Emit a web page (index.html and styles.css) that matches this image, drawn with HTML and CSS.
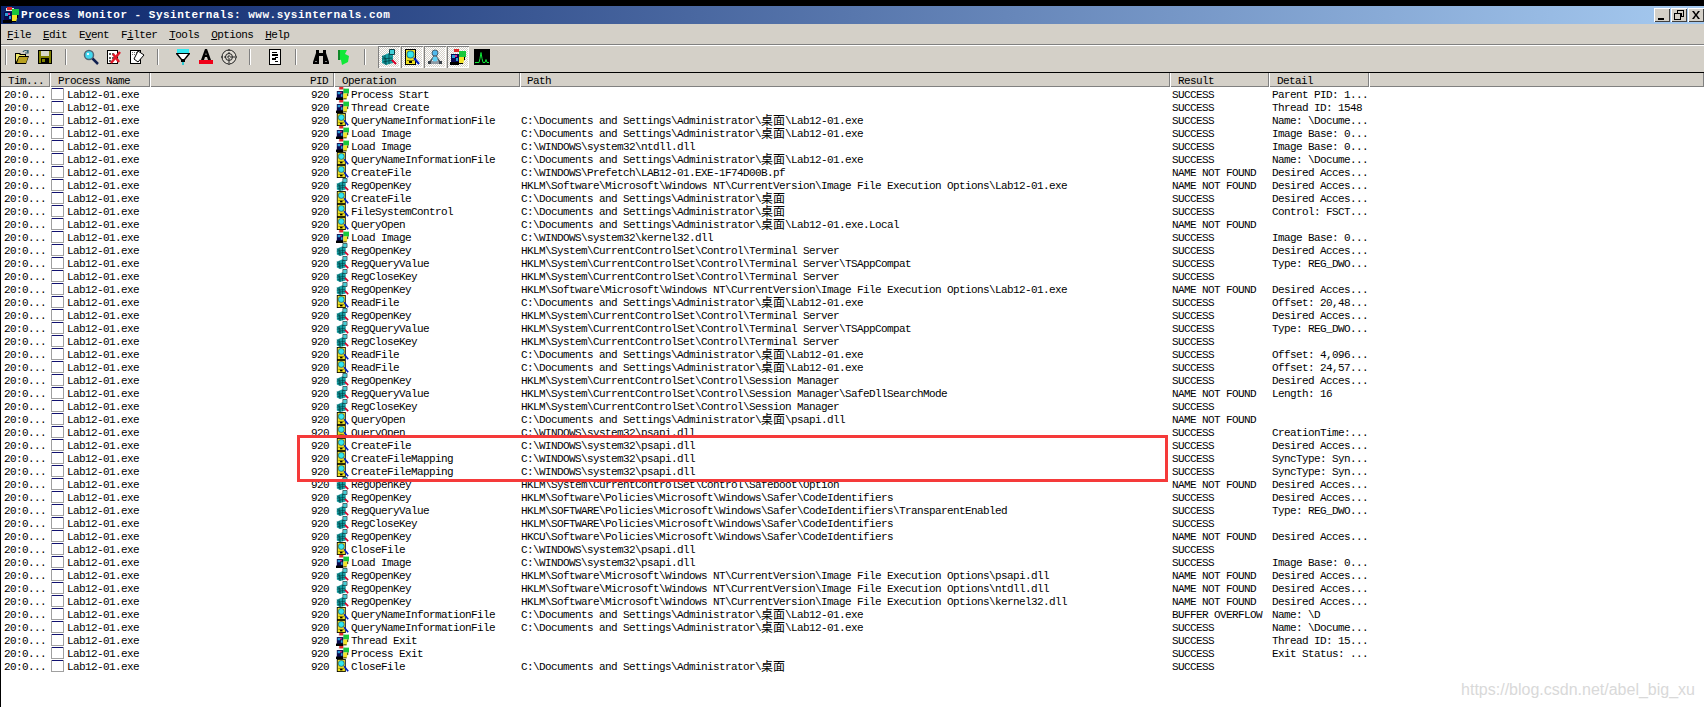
FILE: index.html
```html
<!DOCTYPE html>
<html lang="en">
<head>
<meta charset="utf-8">
<title>Process Monitor - Sysinternals: www.sysinternals.com</title>
<link rel="stylesheet" href="styles.css">
</head>
<body>
<svg class="sprites" xmlns="http://www.w3.org/2000/svg">
  <symbol id="i-proc" viewBox="0 0 16 16"><path fill="#e8e8e8" d="M3 1h8v3H3z"/><path fill="#e02828" d="M4 0h5v3H4z"/><path fill="#18c83c" d="M9 2h7v6H9z"/><path fill="#0a0a50" d="M1 5h8v9H1z"/><path fill="#2a9fd8" d="M2 6h3v3H2zM6 9h2v3H6z"/><path fill="#e02890" d="M5 6h2v2H5z"/><path fill="#000" d="M0 13h9v3H0z"/><path fill="#f4e428" d="M9 8h6l-2 7H9z"/><path fill="#000" d="M9 14h4v1H9zM14 8h1v3h-1z"/></symbol>
  <symbol id="i-file" viewBox="0 0 16 16"><path fill="#000" d="M1 0h11v16H1z"/><path fill="#f0e020" d="M2 1h9v14H2z"/><path fill="#808000" d="M3 11h7v1H3z"/><path fill="#000" d="M5 12h3v2H5z"/><circle cx="6.500" cy="5.500" r="4" fill="#2a7a88"/><circle cx="6.500" cy="5.500" r="3" fill="#30e8f0"/><path fill="none" stroke="#0020c0" stroke-width="2" d="M10 9l5 6"/></symbol>
  <symbol id="i-reg" viewBox="0 0 16 16"><path fill="#18a0a4" d="M1 7l7-3 4 2v8l-7 2-4-2z"/><path fill="none" stroke="#004448" stroke-width=".8" d="M1 10l10-1M2 13l10-2M4 6v9M8 5v10M1 7l4 3v6"/><path fill="#40d0d8" d="M9 1h4v4H9z"/><path fill="none" stroke="#104048" d="M8.500.5h5v5h-5z"/><path fill="none" stroke="#d80028" stroke-width="2" d="M11 11l4 4"/></symbol>
  <symbol id="i-pw" viewBox="0 0 13 13"><path fill="#a0a0a0" d="M0 1h13v12H0z"/><path fill="#fff" d="M1 2h11v10H1z"/><path fill="#101070" d="M1 1h11v1H1z"/></symbol>
  <symbol id="i-net" viewBox="0 0 16 16"><path fill="#909aa4" d="M1 12h14v3H1z"/><path fill="none" stroke="#505860" stroke-width="1.500" d="M8 6L3 13M8 6l5 7"/><circle cx="8" cy="4" r="3" fill="#50b8ec" stroke="#486070"/><circle cx="8" cy="10" r="2.500" fill="#60d0f4"/><path fill="#384048" d="M1 12h3v3H1zM12 12h3v3h-3z"/></symbol>
  <symbol id="i-open" viewBox="0 0 16 16"><path fill="#000" d="M1 4h5l1 1h5v2h3l-3 8H1z"/><path fill="#f0e868" d="M2 5h3l1 1h5v1H5l-3 6z"/><path fill="#b8a020" d="M5 8h9l-2 6H3z"/><path fill="none" stroke="#285868" stroke-width="1.200" d="M9 3c1-2 4-2 5 0M14 1v3h-3"/></symbol>
  <symbol id="i-save" viewBox="0 0 16 16"><path fill="#000" d="M1 1h14v14H1z"/><path fill="#808000" d="M2 2h12v12H2z"/><path fill="#d8d8c8" d="M4 2h8v5H4z"/><path fill="#000" d="M4 9h8v5H4z"/><path fill="#808000" d="M5 10h3v3H5z"/></symbol>
  <symbol id="i-mag" viewBox="0 0 16 16"><circle cx="6" cy="6" r="4.500" fill="#40d8f0" stroke="#506878" stroke-width="1.500"/><path fill="#e8f8ff" d="M4 4h2v2H4z"/><path fill="none" stroke="#102050" stroke-width="2.500" d="M9.500 9.500L15 15"/></symbol>
  <symbol id="i-cap" viewBox="0 0 16 16"><path fill="#000" d="M1 1h11v14H1z"/><path fill="#fff" d="M2 2h9v12H2z"/><path fill="#606060" d="M3 4h2v2H3zM6 4h2v2H6zM3 8h2v2H3zM6 8h2v2H6zM3 11h2v2H3z"/><path fill="none" stroke="#e01828" stroke-width="2.500" d="M5 14L14 3M7 5l6 8"/></symbol>
  <symbol id="i-auto" viewBox="0 0 16 16"><path fill="#000" d="M1 1h11v14H1z"/><path fill="#fff" d="M2 2h9v12H2z"/><path fill="#707070" d="M3 3h1v1H3zM5 3h1v1H5zM7 3h1v1H7zM3 5h1v1H3zM5 5h1v1H5z"/><path fill="#fff" stroke="#000" d="M9 2l6 4-6 7-4-3z"/></symbol>
  <symbol id="i-filter" viewBox="0 0 16 16"><path fill="#30e8f0" d="M2 0h12v4H2z"/><path fill="#000" d="M1 4h14v1l-5 6v2H6v-2L1 5z"/><path fill="#fff" d="M3 5h10l-4 5H7z"/><path fill="#30c8d0" d="M7 13h2v3H7z"/></symbol>
  <symbol id="i-high" viewBox="0 0 16 16"><path fill="#000" d="M7 0h2l4 11H10l-1-3H7l-1 3H3zM7.500 6h1L8 3.500z"/><path fill="#f00018" d="M1 11h14v4H1z"/></symbol>
  <symbol id="i-tgt" viewBox="0 0 16 16"><circle cx="8" cy="8" r="7" fill="#e0dcd4" stroke="#202020" stroke-width="1"/><circle cx="8" cy="8" r="3.500" fill="none" stroke="#202020"/><path stroke="#202020" fill="none" stroke-dasharray="2 1" d="M8 0v16M0 8h16"/></symbol>
  <symbol id="i-doc" viewBox="0 0 16 16"><path fill="#000" d="M2 0h12v16H2z"/><path fill="#fff" d="M3 1h10v14H3z"/><path fill="#000" d="M5 3h5v1H5zM5 5h6v2H5zM8 8h3v1H8zM5 9h4v2H5zM8 12h3v1H8z"/></symbol>
  <symbol id="i-bin" viewBox="0 0 16 16"><path fill="#000" d="M3 1h3v3h4V1h3v3l3 9v2H10V7H6v8H0v-2l3-9z"/><path fill="#808080" d="M2 12h2v1H2zM12 12h2v1h-2z"/></symbol>
  <symbol id="i-jump" viewBox="0 0 16 16"><path fill="#10e838" d="M2 1h9l-2 4 4 2-1 6-6 3-1-5-3-1z"/><path fill="#108828" d="M2 1h2v10H2z"/></symbol>
  <symbol id="i-graph" viewBox="0 0 16 16"><path fill="#000" d="M0 0h16v16H0z"/><path fill="none" stroke="#10e838" d="M1 13.500h4l1-4 1-6 1 6 1 4h2l1-3 1 3h2"/></symbol>
</svg>

<div class="app">
  <div class="screen-top"></div>
  <header class="titlebar">
    <svg class="title-icon"><use href="#i-proc"/></svg>
    <span class="title-text">Process Monitor - Sysinternals: www.sysinternals.com</span>
    <div class="win-controls">
      <span class="win-btn"><svg viewBox="0 0 16 14"><path d="M4 10h6v2H4z"/></svg></span>
      <span class="win-btn"><svg viewBox="0 0 16 14"><path d="M6 2h7v7h-3v3H3V5h3zM7 3v2h4v3h1V3zM4 6v5h5V6z"/></svg></span>
      <span class="win-btn"><svg viewBox="0 0 16 14"><path d="M4 3h2l2 3 2-3h2L9 7l3 4h-2L8 8l-2 3H4l3-4z"/></svg></span>
    </div>
  </header>
  <nav class="menubar">
    <span><u>F</u>ile</span><span><u>E</u>dit</span><span>E<u>v</u>ent</span><span>F<u>i</u>lter</span><span><u>T</u>ools</span><span><u>O</u>ptions</span><span><u>H</u>elp</span>
  </nav>
  <div class="toolbar">
    <span class="sep sep-first"></span>
    <span class="tool"><svg><use href="#i-open"/></svg></span>
    <span class="tool"><svg><use href="#i-save"/></svg></span>
    <span class="sep"></span>
    <span class="tool"><svg><use href="#i-mag"/></svg></span>
    <span class="tool"><svg><use href="#i-cap"/></svg></span>
    <span class="tool"><svg><use href="#i-auto"/></svg></span>
    <span class="sep"></span>
    <span class="tool"><svg><use href="#i-filter"/></svg></span>
    <span class="tool"><svg><use href="#i-high"/></svg></span>
    <span class="tool"><svg><use href="#i-tgt"/></svg></span>
    <span class="sep"></span>
    <span class="tool"><svg><use href="#i-doc"/></svg></span>
    <span class="sep"></span>
    <span class="tool"><svg><use href="#i-bin"/></svg></span>
    <span class="tool"><svg><use href="#i-jump"/></svg></span>
    <span class="sep"></span>
    <span class="tool on"><svg><use href="#i-reg"/></svg></span>
    <span class="tool on"><svg><use href="#i-file"/></svg></span>
    <span class="tool on"><svg><use href="#i-net"/></svg></span>
    <span class="tool on"><svg><use href="#i-proc"/></svg></span>
    <span class="tool"><svg><use href="#i-graph"/></svg></span>
  </div>
  <table class="log">
    <colgroup>
      <col class="c-time"><col class="c-proc"><col class="c-pid"><col class="c-op"><col class="c-path"><col class="c-res"><col class="c-det"><col>
    </colgroup>
    <thead>
      <tr><th>Tim...</th><th>Process Name</th><th class="pid">PID</th><th>Operation</th><th class="h-path">Path</th><th>Result</th><th>Detail</th><th></th></tr>
    </thead>
    <tbody>
      <tr><td class="time">20:0...</td><td><svg class="ic"><use href="#i-pw"/></svg>Lab12-01.exe</td><td class="pid">920</td><td class="op"><svg class="ic"><use href="#i-proc"/></svg>Process Start</td><td></td><td class="res">SUCCESS</td><td class="det">Parent PID: 1...</td><td></td></tr>
      <tr><td class="time">20:0...</td><td><svg class="ic"><use href="#i-pw"/></svg>Lab12-01.exe</td><td class="pid">920</td><td class="op"><svg class="ic"><use href="#i-proc"/></svg>Thread Create</td><td></td><td class="res">SUCCESS</td><td class="det">Thread ID: 1548</td><td></td></tr>
      <tr><td class="time">20:0...</td><td><svg class="ic"><use href="#i-pw"/></svg>Lab12-01.exe</td><td class="pid">920</td><td class="op"><svg class="ic"><use href="#i-file"/></svg>QueryNameInformationFile</td><td>C:\Documents and Settings\Administrator\<span class="cjk">桌面</span>\Lab12-01.exe</td><td class="res">SUCCESS</td><td class="det">Name: \Docume...</td><td></td></tr>
      <tr><td class="time">20:0...</td><td><svg class="ic"><use href="#i-pw"/></svg>Lab12-01.exe</td><td class="pid">920</td><td class="op"><svg class="ic"><use href="#i-proc"/></svg>Load Image</td><td>C:\Documents and Settings\Administrator\<span class="cjk">桌面</span>\Lab12-01.exe</td><td class="res">SUCCESS</td><td class="det">Image Base: 0...</td><td></td></tr>
      <tr><td class="time">20:0...</td><td><svg class="ic"><use href="#i-pw"/></svg>Lab12-01.exe</td><td class="pid">920</td><td class="op"><svg class="ic"><use href="#i-proc"/></svg>Load Image</td><td>C:\WINDOWS\system32\ntdll.dll</td><td class="res">SUCCESS</td><td class="det">Image Base: 0...</td><td></td></tr>
      <tr><td class="time">20:0...</td><td><svg class="ic"><use href="#i-pw"/></svg>Lab12-01.exe</td><td class="pid">920</td><td class="op"><svg class="ic"><use href="#i-file"/></svg>QueryNameInformationFile</td><td>C:\Documents and Settings\Administrator\<span class="cjk">桌面</span>\Lab12-01.exe</td><td class="res">SUCCESS</td><td class="det">Name: \Docume...</td><td></td></tr>
      <tr><td class="time">20:0...</td><td><svg class="ic"><use href="#i-pw"/></svg>Lab12-01.exe</td><td class="pid">920</td><td class="op"><svg class="ic"><use href="#i-file"/></svg>CreateFile</td><td>C:\WINDOWS\Prefetch\LAB12-01.EXE-1F74D00B.pf</td><td class="res">NAME NOT FOUND</td><td class="det">Desired Acces...</td><td></td></tr>
      <tr><td class="time">20:0...</td><td><svg class="ic"><use href="#i-pw"/></svg>Lab12-01.exe</td><td class="pid">920</td><td class="op"><svg class="ic"><use href="#i-reg"/></svg>RegOpenKey</td><td>HKLM\Software\Microsoft\Windows NT\CurrentVersion\Image File Execution Options\Lab12-01.exe</td><td class="res">NAME NOT FOUND</td><td class="det">Desired Acces...</td><td></td></tr>
      <tr><td class="time">20:0...</td><td><svg class="ic"><use href="#i-pw"/></svg>Lab12-01.exe</td><td class="pid">920</td><td class="op"><svg class="ic"><use href="#i-file"/></svg>CreateFile</td><td>C:\Documents and Settings\Administrator\<span class="cjk">桌面</span></td><td class="res">SUCCESS</td><td class="det">Desired Acces...</td><td></td></tr>
      <tr><td class="time">20:0...</td><td><svg class="ic"><use href="#i-pw"/></svg>Lab12-01.exe</td><td class="pid">920</td><td class="op"><svg class="ic"><use href="#i-file"/></svg>FileSystemControl</td><td>C:\Documents and Settings\Administrator\<span class="cjk">桌面</span></td><td class="res">SUCCESS</td><td class="det">Control: FSCT...</td><td></td></tr>
      <tr><td class="time">20:0...</td><td><svg class="ic"><use href="#i-pw"/></svg>Lab12-01.exe</td><td class="pid">920</td><td class="op"><svg class="ic"><use href="#i-file"/></svg>QueryOpen</td><td>C:\Documents and Settings\Administrator\<span class="cjk">桌面</span>\Lab12-01.exe.Local</td><td class="res">NAME NOT FOUND</td><td class="det"></td><td></td></tr>
      <tr><td class="time">20:0...</td><td><svg class="ic"><use href="#i-pw"/></svg>Lab12-01.exe</td><td class="pid">920</td><td class="op"><svg class="ic"><use href="#i-proc"/></svg>Load Image</td><td>C:\WINDOWS\system32\kernel32.dll</td><td class="res">SUCCESS</td><td class="det">Image Base: 0...</td><td></td></tr>
      <tr><td class="time">20:0...</td><td><svg class="ic"><use href="#i-pw"/></svg>Lab12-01.exe</td><td class="pid">920</td><td class="op"><svg class="ic"><use href="#i-reg"/></svg>RegOpenKey</td><td>HKLM\System\CurrentControlSet\Control\Terminal Server</td><td class="res">SUCCESS</td><td class="det">Desired Acces...</td><td></td></tr>
      <tr><td class="time">20:0...</td><td><svg class="ic"><use href="#i-pw"/></svg>Lab12-01.exe</td><td class="pid">920</td><td class="op"><svg class="ic"><use href="#i-reg"/></svg>RegQueryValue</td><td>HKLM\System\CurrentControlSet\Control\Terminal Server\TSAppCompat</td><td class="res">SUCCESS</td><td class="det">Type: REG_DWO...</td><td></td></tr>
      <tr><td class="time">20:0...</td><td><svg class="ic"><use href="#i-pw"/></svg>Lab12-01.exe</td><td class="pid">920</td><td class="op"><svg class="ic"><use href="#i-reg"/></svg>RegCloseKey</td><td>HKLM\System\CurrentControlSet\Control\Terminal Server</td><td class="res">SUCCESS</td><td class="det"></td><td></td></tr>
      <tr><td class="time">20:0...</td><td><svg class="ic"><use href="#i-pw"/></svg>Lab12-01.exe</td><td class="pid">920</td><td class="op"><svg class="ic"><use href="#i-reg"/></svg>RegOpenKey</td><td>HKLM\Software\Microsoft\Windows NT\CurrentVersion\Image File Execution Options\Lab12-01.exe</td><td class="res">NAME NOT FOUND</td><td class="det">Desired Acces...</td><td></td></tr>
      <tr><td class="time">20:0...</td><td><svg class="ic"><use href="#i-pw"/></svg>Lab12-01.exe</td><td class="pid">920</td><td class="op"><svg class="ic"><use href="#i-file"/></svg>ReadFile</td><td>C:\Documents and Settings\Administrator\<span class="cjk">桌面</span>\Lab12-01.exe</td><td class="res">SUCCESS</td><td class="det">Offset: 20,48...</td><td></td></tr>
      <tr><td class="time">20:0...</td><td><svg class="ic"><use href="#i-pw"/></svg>Lab12-01.exe</td><td class="pid">920</td><td class="op"><svg class="ic"><use href="#i-reg"/></svg>RegOpenKey</td><td>HKLM\System\CurrentControlSet\Control\Terminal Server</td><td class="res">SUCCESS</td><td class="det">Desired Acces...</td><td></td></tr>
      <tr><td class="time">20:0...</td><td><svg class="ic"><use href="#i-pw"/></svg>Lab12-01.exe</td><td class="pid">920</td><td class="op"><svg class="ic"><use href="#i-reg"/></svg>RegQueryValue</td><td>HKLM\System\CurrentControlSet\Control\Terminal Server\TSAppCompat</td><td class="res">SUCCESS</td><td class="det">Type: REG_DWO...</td><td></td></tr>
      <tr><td class="time">20:0...</td><td><svg class="ic"><use href="#i-pw"/></svg>Lab12-01.exe</td><td class="pid">920</td><td class="op"><svg class="ic"><use href="#i-reg"/></svg>RegCloseKey</td><td>HKLM\System\CurrentControlSet\Control\Terminal Server</td><td class="res">SUCCESS</td><td class="det"></td><td></td></tr>
      <tr><td class="time">20:0...</td><td><svg class="ic"><use href="#i-pw"/></svg>Lab12-01.exe</td><td class="pid">920</td><td class="op"><svg class="ic"><use href="#i-file"/></svg>ReadFile</td><td>C:\Documents and Settings\Administrator\<span class="cjk">桌面</span>\Lab12-01.exe</td><td class="res">SUCCESS</td><td class="det">Offset: 4,096...</td><td></td></tr>
      <tr><td class="time">20:0...</td><td><svg class="ic"><use href="#i-pw"/></svg>Lab12-01.exe</td><td class="pid">920</td><td class="op"><svg class="ic"><use href="#i-file"/></svg>ReadFile</td><td>C:\Documents and Settings\Administrator\<span class="cjk">桌面</span>\Lab12-01.exe</td><td class="res">SUCCESS</td><td class="det">Offset: 24,57...</td><td></td></tr>
      <tr><td class="time">20:0...</td><td><svg class="ic"><use href="#i-pw"/></svg>Lab12-01.exe</td><td class="pid">920</td><td class="op"><svg class="ic"><use href="#i-reg"/></svg>RegOpenKey</td><td>HKLM\System\CurrentControlSet\Control\Session Manager</td><td class="res">SUCCESS</td><td class="det">Desired Acces...</td><td></td></tr>
      <tr><td class="time">20:0...</td><td><svg class="ic"><use href="#i-pw"/></svg>Lab12-01.exe</td><td class="pid">920</td><td class="op"><svg class="ic"><use href="#i-reg"/></svg>RegQueryValue</td><td>HKLM\System\CurrentControlSet\Control\Session Manager\SafeDllSearchMode</td><td class="res">NAME NOT FOUND</td><td class="det">Length: 16</td><td></td></tr>
      <tr><td class="time">20:0...</td><td><svg class="ic"><use href="#i-pw"/></svg>Lab12-01.exe</td><td class="pid">920</td><td class="op"><svg class="ic"><use href="#i-reg"/></svg>RegCloseKey</td><td>HKLM\System\CurrentControlSet\Control\Session Manager</td><td class="res">SUCCESS</td><td class="det"></td><td></td></tr>
      <tr><td class="time">20:0...</td><td><svg class="ic"><use href="#i-pw"/></svg>Lab12-01.exe</td><td class="pid">920</td><td class="op"><svg class="ic"><use href="#i-file"/></svg>QueryOpen</td><td>C:\Documents and Settings\Administrator\<span class="cjk">桌面</span>\psapi.dll</td><td class="res">NAME NOT FOUND</td><td class="det"></td><td></td></tr>
      <tr><td class="time">20:0...</td><td><svg class="ic"><use href="#i-pw"/></svg>Lab12-01.exe</td><td class="pid">920</td><td class="op"><svg class="ic"><use href="#i-file"/></svg>QueryOpen</td><td>C:\WINDOWS\system32\psapi.dll</td><td class="res">SUCCESS</td><td class="det">CreationTime:...</td><td></td></tr>
      <tr><td class="time">20:0...</td><td><svg class="ic"><use href="#i-pw"/></svg>Lab12-01.exe</td><td class="pid">920</td><td class="op"><svg class="ic"><use href="#i-file"/></svg>CreateFile</td><td>C:\WINDOWS\system32\psapi.dll</td><td class="res">SUCCESS</td><td class="det">Desired Acces...</td><td></td></tr>
      <tr><td class="time">20:0...</td><td><svg class="ic"><use href="#i-pw"/></svg>Lab12-01.exe</td><td class="pid">920</td><td class="op"><svg class="ic"><use href="#i-file"/></svg>CreateFileMapping</td><td>C:\WINDOWS\system32\psapi.dll</td><td class="res">SUCCESS</td><td class="det">SyncType: Syn...</td><td></td></tr>
      <tr><td class="time">20:0...</td><td><svg class="ic"><use href="#i-pw"/></svg>Lab12-01.exe</td><td class="pid">920</td><td class="op"><svg class="ic"><use href="#i-file"/></svg>CreateFileMapping</td><td>C:\WINDOWS\system32\psapi.dll</td><td class="res">SUCCESS</td><td class="det">SyncType: Syn...</td><td></td></tr>
      <tr><td class="time">20:0...</td><td><svg class="ic"><use href="#i-pw"/></svg>Lab12-01.exe</td><td class="pid">920</td><td class="op"><svg class="ic"><use href="#i-reg"/></svg>RegOpenKey</td><td>HKLM\System\CurrentControlSet\Control\Safeboot\Option</td><td class="res">NAME NOT FOUND</td><td class="det">Desired Acces...</td><td></td></tr>
      <tr><td class="time">20:0...</td><td><svg class="ic"><use href="#i-pw"/></svg>Lab12-01.exe</td><td class="pid">920</td><td class="op"><svg class="ic"><use href="#i-reg"/></svg>RegOpenKey</td><td>HKLM\Software\Policies\Microsoft\Windows\Safer\CodeIdentifiers</td><td class="res">SUCCESS</td><td class="det">Desired Acces...</td><td></td></tr>
      <tr><td class="time">20:0...</td><td><svg class="ic"><use href="#i-pw"/></svg>Lab12-01.exe</td><td class="pid">920</td><td class="op"><svg class="ic"><use href="#i-reg"/></svg>RegQueryValue</td><td>HKLM\SOFTWARE\Policies\Microsoft\Windows\Safer\CodeIdentifiers\TransparentEnabled</td><td class="res">SUCCESS</td><td class="det">Type: REG_DWO...</td><td></td></tr>
      <tr><td class="time">20:0...</td><td><svg class="ic"><use href="#i-pw"/></svg>Lab12-01.exe</td><td class="pid">920</td><td class="op"><svg class="ic"><use href="#i-reg"/></svg>RegCloseKey</td><td>HKLM\SOFTWARE\Policies\Microsoft\Windows\Safer\CodeIdentifiers</td><td class="res">SUCCESS</td><td class="det"></td><td></td></tr>
      <tr><td class="time">20:0...</td><td><svg class="ic"><use href="#i-pw"/></svg>Lab12-01.exe</td><td class="pid">920</td><td class="op"><svg class="ic"><use href="#i-reg"/></svg>RegOpenKey</td><td>HKCU\Software\Policies\Microsoft\Windows\Safer\CodeIdentifiers</td><td class="res">NAME NOT FOUND</td><td class="det">Desired Acces...</td><td></td></tr>
      <tr><td class="time">20:0...</td><td><svg class="ic"><use href="#i-pw"/></svg>Lab12-01.exe</td><td class="pid">920</td><td class="op"><svg class="ic"><use href="#i-file"/></svg>CloseFile</td><td>C:\WINDOWS\system32\psapi.dll</td><td class="res">SUCCESS</td><td class="det"></td><td></td></tr>
      <tr><td class="time">20:0...</td><td><svg class="ic"><use href="#i-pw"/></svg>Lab12-01.exe</td><td class="pid">920</td><td class="op"><svg class="ic"><use href="#i-proc"/></svg>Load Image</td><td>C:\WINDOWS\system32\psapi.dll</td><td class="res">SUCCESS</td><td class="det">Image Base: 0...</td><td></td></tr>
      <tr><td class="time">20:0...</td><td><svg class="ic"><use href="#i-pw"/></svg>Lab12-01.exe</td><td class="pid">920</td><td class="op"><svg class="ic"><use href="#i-reg"/></svg>RegOpenKey</td><td>HKLM\Software\Microsoft\Windows NT\CurrentVersion\Image File Execution Options\psapi.dll</td><td class="res">NAME NOT FOUND</td><td class="det">Desired Acces...</td><td></td></tr>
      <tr><td class="time">20:0...</td><td><svg class="ic"><use href="#i-pw"/></svg>Lab12-01.exe</td><td class="pid">920</td><td class="op"><svg class="ic"><use href="#i-reg"/></svg>RegOpenKey</td><td>HKLM\Software\Microsoft\Windows NT\CurrentVersion\Image File Execution Options\ntdll.dll</td><td class="res">NAME NOT FOUND</td><td class="det">Desired Acces...</td><td></td></tr>
      <tr><td class="time">20:0...</td><td><svg class="ic"><use href="#i-pw"/></svg>Lab12-01.exe</td><td class="pid">920</td><td class="op"><svg class="ic"><use href="#i-reg"/></svg>RegOpenKey</td><td>HKLM\Software\Microsoft\Windows NT\CurrentVersion\Image File Execution Options\kernel32.dll</td><td class="res">NAME NOT FOUND</td><td class="det">Desired Acces...</td><td></td></tr>
      <tr><td class="time">20:0...</td><td><svg class="ic"><use href="#i-pw"/></svg>Lab12-01.exe</td><td class="pid">920</td><td class="op"><svg class="ic"><use href="#i-file"/></svg>QueryNameInformationFile</td><td>C:\Documents and Settings\Administrator\<span class="cjk">桌面</span>\Lab12-01.exe</td><td class="res">BUFFER OVERFLOW</td><td class="det">Name: \D</td><td></td></tr>
      <tr><td class="time">20:0...</td><td><svg class="ic"><use href="#i-pw"/></svg>Lab12-01.exe</td><td class="pid">920</td><td class="op"><svg class="ic"><use href="#i-file"/></svg>QueryNameInformationFile</td><td>C:\Documents and Settings\Administrator\<span class="cjk">桌面</span>\Lab12-01.exe</td><td class="res">SUCCESS</td><td class="det">Name: \Docume...</td><td></td></tr>
      <tr><td class="time">20:0...</td><td><svg class="ic"><use href="#i-pw"/></svg>Lab12-01.exe</td><td class="pid">920</td><td class="op"><svg class="ic"><use href="#i-proc"/></svg>Thread Exit</td><td></td><td class="res">SUCCESS</td><td class="det">Thread ID: 15...</td><td></td></tr>
      <tr><td class="time">20:0...</td><td><svg class="ic"><use href="#i-pw"/></svg>Lab12-01.exe</td><td class="pid">920</td><td class="op"><svg class="ic"><use href="#i-proc"/></svg>Process Exit</td><td></td><td class="res">SUCCESS</td><td class="det">Exit Status: ...</td><td></td></tr>
      <tr><td class="time">20:0...</td><td><svg class="ic"><use href="#i-pw"/></svg>Lab12-01.exe</td><td class="pid">920</td><td class="op"><svg class="ic"><use href="#i-file"/></svg>CloseFile</td><td>C:\Documents and Settings\Administrator\<span class="cjk">桌面</span></td><td class="res">SUCCESS</td><td class="det"></td><td></td></tr>
    </tbody>
  </table>
  <div class="callout"></div>
  <div class="watermark">https://blog.csdn.net/abel_big_xu</div>
</div>
</body>
</html>
```
FILE: styles.css
```css
* { box-sizing: border-box; }
html, body { margin: 0; height: 100%; background: #fff; overflow: hidden; }
.sprites { display: none; }

.app {
  position: relative;
  width: 1704px;
  height: 707px;
  overflow: hidden;
  border-left: 1px solid #000;
  font-family: "Liberation Mono", "Noto Sans CJK SC", monospace;
  font-size: 11px;
  letter-spacing: -0.6px;
  color: #000;
}
.screen-top { height: 6px; background: #000; margin-left: -1px; }

.titlebar {
  display: flex;
  align-items: center;
  height: 18px;
  padding-left: 2px;
  background: linear-gradient(90deg, #0a246a, #a6caf0);
  color: #fff;
}
.title-icon { width: 16px; height: 16px; margin-right: 2px; }
.title-text { font-weight: 700; letter-spacing: 0.5px; }
.win-controls { display: flex; margin-left: auto; }
.win-btn {
  display: block;
  width: 16px;
  height: 14px;
  margin-right: 1px;
  background: #d4d0c8;
  box-shadow: inset 1px 1px #fff, inset -1px -1px #404040;
}
.win-btn:last-child { margin-right: 0; }
.win-btn svg { display: block; width: 16px; height: 14px; }

.menubar {
  display: flex;
  gap: 12px;
  height: 22px;
  padding-left: 6px;
  align-items: center;
  background: #d4d0c8;
  border-bottom: 1px solid #fff;
  box-shadow: inset 0 -1px #808080;
}

.toolbar {
  display: flex;
  align-items: flex-start;
  height: 27px;
  padding-left: 4px;
  background: #d4d0c8;
  border-bottom: 1px solid #000;
}
.tool {
  display: flex;
  align-items: center;
  justify-content: center;
  width: 23px;
  height: 22px;
}
.tool svg { width: 16px; height: 16px; }
.tool.on {
  width: 22px;
  margin-right: 1px;
  background-color: #fff;
  background-image: conic-gradient(#d4d0c8 25%, #fff 0 50%, #d4d0c8 0 75%, #fff 0);
  background-size: 2px 2px;
  box-shadow: inset 1px 1px #808080, inset -1px -1px #fff;
}
.sep {
  width: 2px;
  height: 16px;
  margin: 3px 12px 0 9px;
  border-left: 1px solid #808080;
  border-right: 1px solid #fff;
}
.sep-first { margin: 3px 3px 0 0; }

.log {
  width: 1703px;
  table-layout: fixed;
  border-collapse: separate;
  border-spacing: 0;
}
.c-time { width: 50px; }
.c-proc { width: 100px; }
.c-pid { width: 184px; }
.c-op { width: 186px; }
.c-path { width: 650px; }
.c-res { width: 99px; }
.c-det { width: 100px; }

.log th {
  height: 14px;
  padding: 2px 0 0 7px;
  font-weight: 400;
  line-height: 12px;
  text-align: left;
  background: #d4d0c8;
  border-right: 1px solid #fff;
  box-shadow: inset -1px 0 #808080, inset 0 -1px #808080;
}
.log th:last-child { border-right: 0; }
.log th.pid { padding: 2px 6px 0 0; text-align: right; }
.log th.h-path { padding-left: 6px; }
.log td {
  height: 13px;
  padding: 3px 0 0;
  line-height: 10px;
  white-space: nowrap;
}
.log td.time { padding-left: 3px; }
.log td.pid { padding-right: 6px; text-align: right; }
.log td.op { padding-left: 1px; }
.log td.res { padding-left: 1px; }
.log td.det { padding-left: 2px; }
.ic {
  display: inline-block;
  width: 13px;
  height: 13px;
  margin: -3px 3px 0 0;
  vertical-align: top;
}
.log td.op .ic { margin-right: 2px; }
.cjk {
  display: inline-block;
  width: 24px;
  height: 13px;
  margin-top: -3px;
  vertical-align: top;
  font-family: "Noto Sans CJK SC", sans-serif;
  font-size: 12px;
  line-height: 13px;
  letter-spacing: 0;
}

.callout {
  position: absolute;
  left: 296px;
  top: 435px;
  width: 871px;
  height: 47px;
  border: 3px solid #f53a3a;
}
.watermark {
  position: absolute;
  right: 9px;
  top: 681px;
  font-family: "Liberation Sans", sans-serif;
  font-size: 16px;
  line-height: 18px;
  letter-spacing: 0;
  color: #d9d9d9;
}
```
